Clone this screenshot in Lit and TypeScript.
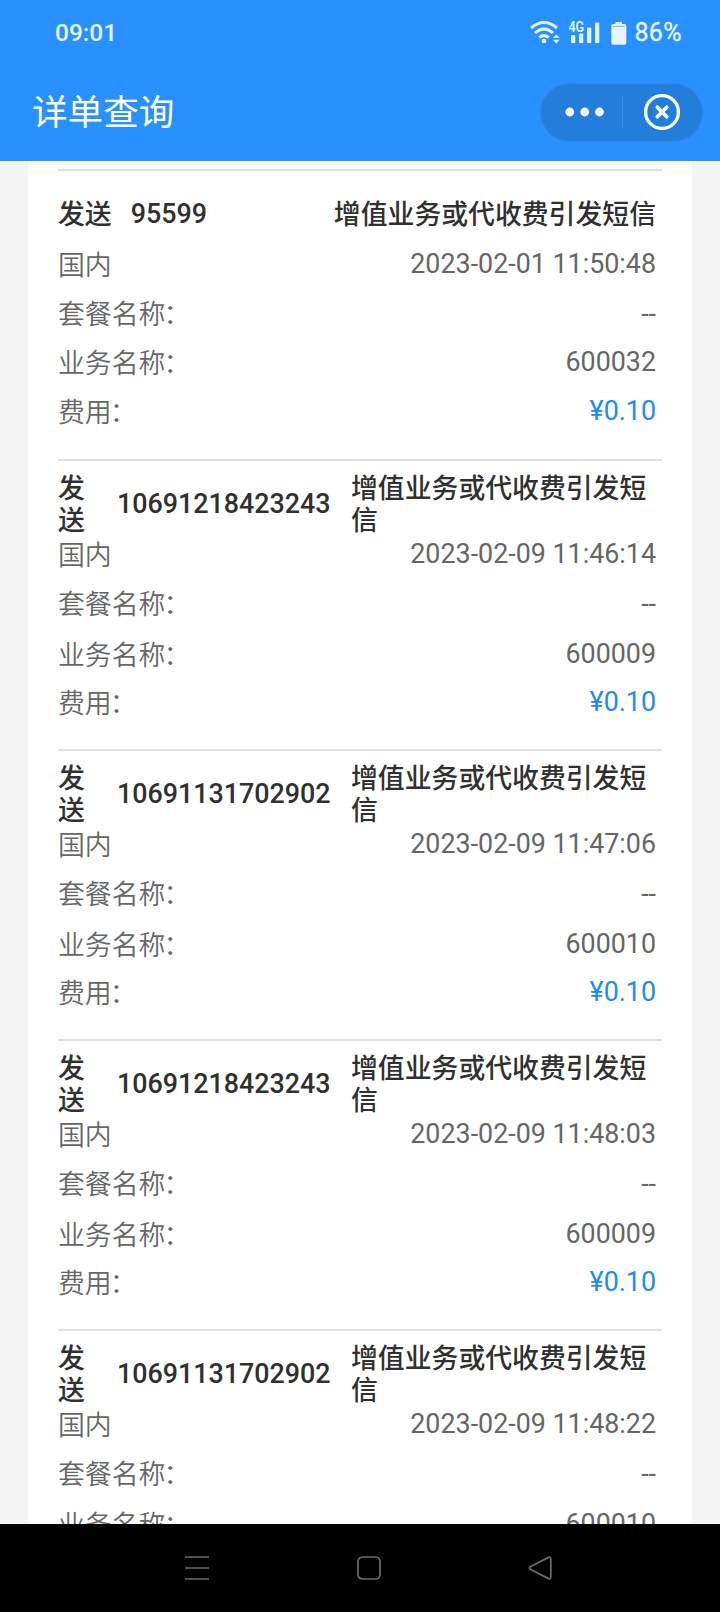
import { LitElement, html, css } from "lit";
import { customElement, property } from "lit/decorators.js";
import { classMap } from "lit/directives/class-map.js";

interface RecordItem {
  number: string;
  time: string;
  service: string;
}

const RECORDS: RecordItem[] = [
  { number: "95599", time: "2023-02-01 11:50:48", service: "600032" },
  { number: "10691218423243", time: "2023-02-09 11:46:14", service: "600009" },
  { number: "10691131702902", time: "2023-02-09 11:47:06", service: "600010" },
  { number: "10691218423243", time: "2023-02-09 11:48:03", service: "600009" },
  { number: "10691131702902", time: "2023-02-09 11:48:22", service: "600010" },
];

@customElement("status-bar")
class StatusBar extends LitElement {
  static styles = css`
    :host {
      display: flex;
      justify-content: space-between;
      align-items: center;
      height: 64px;
      padding: 1px 38px 0 55px;
      box-sizing: border-box;
      color: #e6f4ff;
      font-family: Roboto, sans-serif;
      font-weight: 500;
      font-size: 24.500px;
      line-height: 28px;
    }
    .side { display: flex; align-items: center; }
    .pct { font-size: 25px; font-weight: 400; letter-spacing: 0.400px; -webkit-text-stroke: 0.4px #e6f4ff; }
    svg { display: block; margin-right: 1px; }
    .net { font: 600 14px Roboto, sans-serif; }
  `;
  render() {
    return html`
      <span>09:01</span>
      <div class="side">
        <svg width="104" height="28" viewBox="530 18 104 28" fill="#e6f4ff">
          <g fill="none" stroke="#e6f4ff" stroke-width="3">
            <path d="M532 27Q545 16 558 27" />
            <path d="M536 32Q545 24 554 32" />
            <path d="M540.300 36.500Q545 32.500 549.700 36.500" />
          </g>
          <circle cx="545" cy="40" r="2.300" />
          <path d="M554 36.800l3.300-3.400 3.300 3.400zM554 38.800h6.600l-3.300 3.600z" />
          <text class="net" x="569.500" y="31" textLength="15.500" lengthAdjust="spacingAndGlyphs">4G</text>
          <rect x="572" y="34" width="4.300" height="8" rx="1" />
          <rect x="580" y="32.500" width="4.300" height="9.500" rx="1" />
          <rect x="588" y="26.500" width="4.300" height="15.500" rx="1" />
          <rect x="596" y="21.500" width="4.300" height="20.500" rx="1" />
          <path d="M616.500 21h6.500v2h2.500q1.800 0 1.800 1.800v17q0 2-2 2h-11q-2 0-2-2v-17q0-1.800 1.800-1.800h2.400z" />
          <path d="M614 25.400h11.500" stroke="#6fb6fb" stroke-width="1" />
        </svg>
        <span class="pct">86%</span>
      </div>
    `;
  }
}

@customElement("title-bar")
class TitleBar extends LitElement {
  static styles = css`
    :host {
      display: flex;
      justify-content: space-between;
      align-items: center;
      height: 97px;
      padding: 0 17px 1px 32px;
      box-sizing: border-box;
    }
    .title {
      margin: 0;
      padding-bottom: 5px;
      color: #fff;
      font: 400 35.600px/48px "Noto Sans CJK SC", sans-serif;
    }
    .capsule {
      display: flex;
      align-items: center;
      box-sizing: border-box;
      width: 163px;
      height: 59px;
      border: 1px solid #3088e6;
      border-radius: 30px;
      background: #237dda;
    }
    svg { display: block; }
    .half { display: grid; place-items: center; }
    .rule { width: 1px; height: 32px; background: #3d8fe4; }
    .dots { width: 80px; padding-left: 1px; }
    .close { width: 80px; }
  `;
  render() {
    return html`
      <h1 class="title">详单查询</h1>
      <div class="capsule">
        <span class="half dots">
          <svg width="44" height="10" fill="#fff">
            <circle cx="9.800" cy="5" r="4.400" /><circle cx="24.700" cy="5" r="4.400" /><circle cx="39.500" cy="5" r="4.400" />
          </svg>
        </span>
        <span class="rule"></span>
        <span class="half close">
          <svg width="38" height="38" viewBox="0 0 38 38" fill="none" stroke="#fff">
            <circle cx="19" cy="19" r="16.400" stroke-width="3.300" />
            <path d="M14.300 14.300l9.400 9.400M23.700 14.300l-9.400 9.400" stroke-width="3.700" stroke-linecap="round" />
          </svg>
        </span>
      </div>
    `;
  }
}

@customElement("bill-record")
class BillRecord extends LitElement {
  @property({ attribute: false }) item!: RecordItem;
  static styles = css`
    :host {
      display: block;
      height: 290px;
      box-sizing: border-box;
      border-top: 2px solid #e1e1e3;
      padding: 18px 6px 0 0;
      color: #666;
      font: 400 26.850px/32px Roboto, "Noto Sans CJK SC", sans-serif;
    }
    .rows { display: grid; grid-template-rows: 49px 52px 47px 54px 42px; }
    .rows.short { grid-template-rows: 49px 52px 47px 50px 48px; }
    .row { display: flex; justify-content: space-between; align-items: center; white-space: nowrap; }
    .head { color: #303030; font-weight: 500; }
    .label { padding-bottom: 1px; font-weight: 350; font-family: "Noto Sans CJK SC", sans-serif; }
    .colon { margin-left: -2px; }
    .action, .type { padding-top: 2px; }
    .number { margin-left: 19px; }
    .type { margin-left: auto; }
    .long .action { width: 27px; white-space: normal; }
    .long .number { margin-left: 32px; }
    .long .type { width: 311px; margin-right: -6px; white-space: normal; }
    .fee { color: #2589ef; }
  `;
  render() {
    const { number, time, service } = this.item;
    const long = number.length > 8;
    const label = (text: string) => html`<span class="label">${text}<span class="colon">：</span></span>`;
    return html`
      <div class=${classMap({ rows: true, short: !long })}>
        <div class=${classMap({ row: true, head: true, long })}>
          <span class="action">发送</span>
          <span class="number">${number}</span>
          <span class="type">增值业务或代收费引发短信</span>
        </div>
        <div class="row"><span class="label">国内</span><span>${time}</span></div>
        <div class="row">${label("套餐名称")}<span>--</span></div>
        <div class="row">${label("业务名称")}<span>${service}</span></div>
        <div class="row">${label("费用")}<span class="fee">¥0.10</span></div>
      </div>
    `;
  }
}

@customElement("nav-bar")
class NavBar extends LitElement {
  static styles = css`
    :host {
      display: flex;
      align-items: center;
      justify-content: space-between;
      height: 88px;
      box-sizing: border-box;
      padding: 0 167px 0 184px;
      background: #000;
    }
    svg { display: block; }
  `;
  render() {
    return html`
      <svg width="26" height="26" stroke="#6b6b6b" stroke-width="1.700"><path d="M1 2h24M1 13h24M1 24h24" /></svg>
      <svg width="26" height="26" fill="none" stroke="#6b6b6b" stroke-width="1.700"><rect x="2" y="2" width="22" height="22" rx="4.500" /></svg>
      <svg width="26" height="26" fill="none" stroke="#6b6b6b" stroke-width="1.700"><path d="M3.200 11.800L21.500 2.400Q23.800 1.500 23.800 4V22Q23.800 24.500 21.500 23.600L3.200 14.200Q1.500 13 3.200 11.800z" /></svg>
    `;
  }
}

@customElement("app-root")
class AppRoot extends LitElement {
  static styles = css`
    :host {
      display: flex;
      flex-direction: column;
      width: 720px;
      height: 1612px;
      overflow: hidden;
      background: #f4f4f4;
    }
    .top { flex: none; background: #2890ff; }
    .list {
      flex: 1;
      min-height: 0;
      overflow: hidden;
      margin: 0 28px;
      padding: 8px 30px 0;
      background: #fff;
    }
    nav-bar { flex: none; }
  `;
  render() {
    return html`
      <header class="top"><status-bar></status-bar><title-bar></title-bar></header>
      <main class="list">${RECORDS.map((item) => html`<bill-record .item=${item}></bill-record>`)}</main>
      <nav-bar></nav-bar>
    `;
  }
}
